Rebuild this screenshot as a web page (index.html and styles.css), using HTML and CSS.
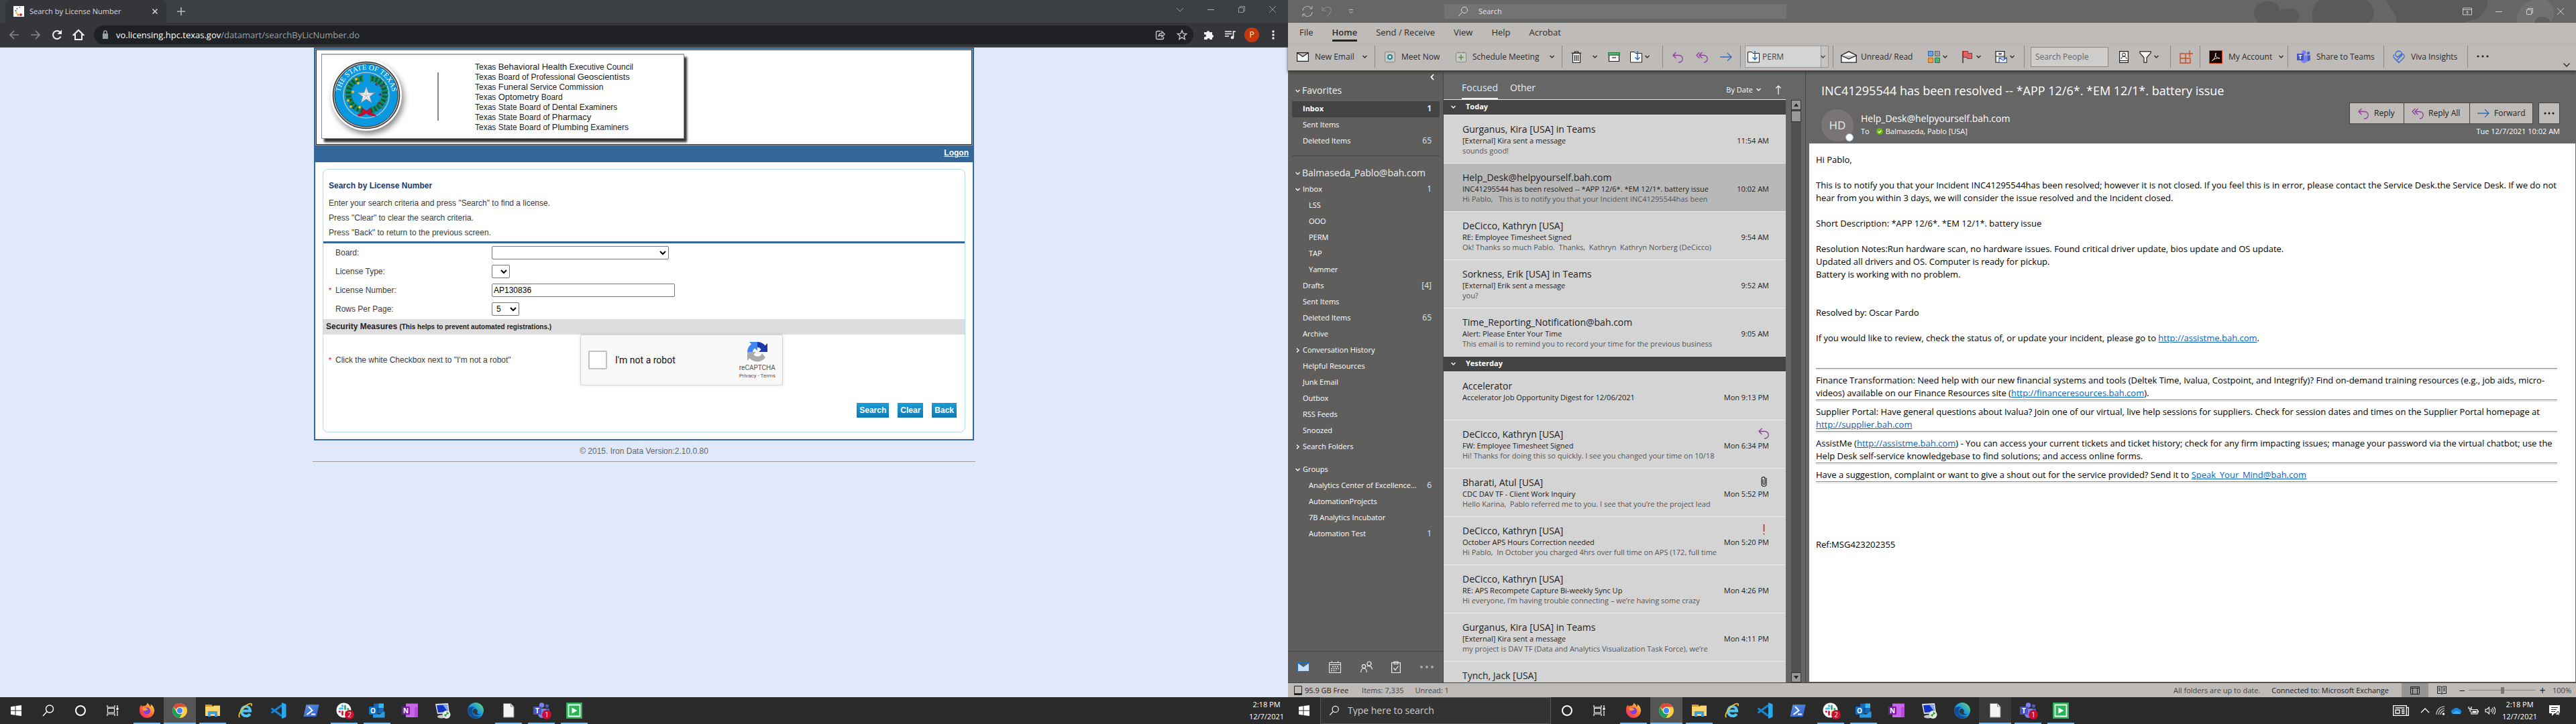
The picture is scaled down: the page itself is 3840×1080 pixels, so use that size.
FILE: index.html
```
<!DOCTYPE html>
<html lang="en">
<head>
<meta charset="utf-8">
<title>Desktop</title>
<link rel="stylesheet" href="styles.css">
</head>
<body>
<svg class="defs" aria-hidden="true">
  <defs>
    <linearGradient id="ffx" x1="0" y1="1" x2="1" y2="0"><stop offset="0" stop-color="#f0167a"/><stop offset=".5" stop-color="#ff6a2b"/><stop offset="1" stop-color="#ffe14a"/></linearGradient>
    <linearGradient id="edg" x1="0" y1="1" x2="1" y2="0"><stop offset="0" stop-color="#0c59a4"/><stop offset=".55" stop-color="#1f9de0"/><stop offset="1" stop-color="#6fe057"/></linearGradient>
    <linearGradient id="psg" x1="0" y1="0" x2="1" y2="1"><stop offset="0" stop-color="#5a8ee6"/><stop offset="1" stop-color="#2f5fc2"/></linearGradient>
  </defs>
  <symbol id="chev" viewBox="0 0 9 9"><path d="M1.5 3l3 3 3-3" fill="none" stroke="currentColor" stroke-width="1.4"/></symbol>
  <symbol id="t-start" viewBox="0 0 24 24"><path fill="#fff" d="M4 6.200l6.500-.9v6.200H4zM11.500 5.100L20 4v7.500h-8.500zM4 12.500h6.500v6.200L4 17.800zM11.500 12.500H20V20l-8.500-1.100z"/></symbol>
  <symbol id="t-search" viewBox="0 0 24 24"><g fill="none" stroke="#fff" stroke-width="1.400"><circle cx="14" cy="9.500" r="5.500"/><path d="M10 13.500L4 20"/></g></symbol>
  <symbol id="t-circle" viewBox="0 0 24 24"><circle cx="12" cy="12" r="7" fill="none" stroke="#fff" stroke-width="2"/></symbol>
  <symbol id="t-view" viewBox="0 0 24 24"><path fill="none" stroke="#fff" stroke-width="1.200" d="M4 4v3h11V4M4 20v-3h11v3M4.500 8.500h10v6.500h-10zM19 4v4M19 12v8"/><path fill="#fff" d="M17.500 8h3v3h-3z"/></symbol>
  <symbol id="t-firefox" viewBox="0 0 24 24"><path fill="url(#ffx)" d="M1 12C1 7 2 5 3.500 3.500c.2 1 .6 1.500 1.200 2C6.500 4.500 8 4.500 9 5c2-1 3-2.500 3.500-4.500C15 2 16 4 16.500 6 18 6 18 4 17.500 2.500 21 4.500 23.200 8 23 12.500 22.500 19 17.500 23 12 23S1 18 1 12z"/><circle cx="12" cy="12.500" r="5" fill="#7a3fe0"/><path fill="#ff9a2e" d="M5 9c2-2 5-2 7 .5l2 .5c-1 1.500-3 1-4 2.500-2 0-4-1-5-3.500z"/></symbol>
  <symbol id="t-chrome" viewBox="0 0 24 24"><circle cx="12" cy="12" r="11" fill="#ffcd40"/><path fill="#dc4a38" d="M2.500 6.500A11 11 0 0 1 21.500 6.500H12A5.500 5.500 0 0 0 6.800 10z"/><path fill="#1a9c5a" d="M2.500 6.500A11 11 0 0 0 11.500 23l4.300-7.600A5.500 5.500 0 0 1 7 14z"/><circle cx="12" cy="12" r="5.200" fill="#fff"/><circle cx="12" cy="12" r="4.200" fill="#4285f4"/></symbol>
  <symbol id="t-folder" viewBox="0 0 24 24"><path fill="#e09a1a" d="M1 3h9l2 2v4H1z"/><path fill="#fcd46c" d="M1 6h11l2-1.500h9V20H1z"/><path fill="#3f9fdc" d="M5 13h14v8h-4v-4H9v4H5z"/></symbol>
  <symbol id="t-ie" viewBox="0 0 24 24"><path fill="none" stroke="#4cc3f3" stroke-width="4.200" d="M5 12.500h14c0-4-3-6.500-6.500-6.500S6 9 6 13s3 7 7 7c2.500 0 4.500-1 5.500-3.200"/><path fill="none" stroke="#f6c41d" stroke-width="1.800" d="M3.500 22C0 20 5 10 12 5s11-4 8.500 0"/></symbol>
  <symbol id="t-code" viewBox="0 0 24 24"><path fill="none" stroke="#1583cf" stroke-width="3.200" d="M1.500 8.500L17 20M1.500 15.500L17 4"/><path fill="#29a9ee" d="M17 0l6.500 2.500v19L17 24z"/></symbol>
  <symbol id="t-ps" viewBox="0 0 24 24"><path fill="url(#psg)" d="M4.500 3h19.200l-4 18H.5z"/><path fill="none" stroke="#fff" stroke-width="2" d="M8 6l5.500 5.800L5.500 18M12 17.500h6"/></symbol>
  <symbol id="t-slack" viewBox="0 0 24 24"><circle cx="11.500" cy="11.500" r="11" fill="#fff"/><g stroke-width="3" stroke-linecap="round"><path stroke="#36c5f0" d="M5.500 9h4M9.500 4.500v1"/><path stroke="#2eb67d" d="M13.500 5v4.500M18 9.500h-.5"/><path stroke="#e01e5a" d="M9.500 13.500v4.500M5 13.500h.5"/><path stroke="#ecb22e" d="M14 14h4"/></g></symbol>
  <symbol id="t-outlook" viewBox="0 0 24 24"><path fill="#1769b8" d="M7 1.500h15V16H7z"/><path fill="#35b8f1" d="M14.500 1.500H22V8h-7.500z"/><path fill="#0a4f96" d="M7 8h7.500v7H7z"/><path fill="#2a9be4" d="M6 22.500V14l9 4 8.500-5v9.500z"/><path fill="#0f6fc6" d="M0 6h12v12H0z"/><text x="6" y="15.500" text-anchor="middle" class="tile">O</text></symbol>
  <symbol id="t-onenote" viewBox="0 0 24 24"><path fill="#ca64ea" d="M6 1.500h18v20.500H6z"/><path fill="#ab47cf" d="M19 7h5v5h-5zM19 12h5v10h-5z" opacity=".8"/><path fill="#7719aa" d="M0 6h12v12H0z"/><text x="6" y="15.500" text-anchor="middle" class="tile">N</text></symbol>
  <symbol id="t-rdp" viewBox="0 0 24 24"><path fill="#dfe3e8" d="M1 2l19-1 2 15-18 1z"/><path fill="#1233c4" d="M3 4l15.500-1 1.500 11-15 1z"/><path fill="#8aa7f2" d="M12 3.400l6.500-.4 1.500 11z"/><ellipse cx="10" cy="21" rx="6" ry="2.500" fill="#c5c8cc"/><circle cx="17.500" cy="18" r="6" fill="#e4e7e2"/><path fill="none" stroke="#2e9a34" stroke-width="1.500" d="M14 19l3-1-1 3M18 17l3-1M18 17l1-3"/></symbol>
  <symbol id="t-edge" viewBox="0 0 24 24"><circle cx="12" cy="12" r="12" fill="url(#edg)"/><path fill="#2b2b2b" d="M14 15.500c2-2 .5-6.500-3-6.500-2 0-4 2-3.500 5 .5 2.500 4 4.500 8 4.500 3 0 6-1.500 8-3.500l1 3-4 4c2-2 2-4 3-6-3 2-8 2-9.500-.5z" opacity=".85"/><path fill="#0f4f99" d="M.5 10C2 6.500 7 5 11 7.500 6 8 5 14 9 18.500c2 2.200 6 3 10 1.500C16 24 9 25 4.500 21 1 18 0 14 .5 10z"/></symbol>
  <symbol id="t-file" viewBox="0 0 24 24"><path fill="#f4f4f4" stroke="#8b8b8b" d="M4.500 1.500h11l4.500 4.500v16H4.500z"/><path fill="#ddd" stroke="#8b8b8b" d="M15.500 1.500V6H20z"/></symbol>
  <symbol id="t-teams" viewBox="0 0 24 24"><circle cx="12.500" cy="4" r="3.800" fill="#7b83eb"/><circle cx="20.500" cy="5" r="2.600" fill="#5059c9"/><path fill="#5059c9" d="M17 9h7v7a4 4 0 0 1-7 2z"/><path fill="#7b83eb" d="M7 9h12v8a6 6 0 0 1-12 0z"/><path fill="#4b53bc" d="M0 6h12v12H0z"/><text x="6" y="15.500" text-anchor="middle" class="tile">T</text></symbol>
  <symbol id="t-green" viewBox="0 0 24 24"><path fill="#27b556" d="M0 0h24v24H0z"/><path fill="none" stroke="#fff" stroke-width="1.800" d="M3.500 3.500h17v17h-17z"/><path fill="#fff" d="M8.500 7.500l8 4.500-8 4.500z"/></symbol>
  <symbol id="reply" viewBox="0 0 18 18"><path fill="none" stroke="#8c3d9c" stroke-width="1.300" d="M6.500 2L2 6.500 6.500 11M2 6.500h9a4.500 4.500 0 0 1 0 10.500h-1"/></symbol>
  <symbol id="replyall" viewBox="0 0 18 18"><path fill="none" stroke="#8c3d9c" stroke-width="1.300" d="M5.500 2L1 6.500 5.500 11M9.500 2L5 6.500 9.500 11M5 6.500h7a4.500 4.500 0 0 1 0 10.500"/></symbol>
  <symbol id="forward" viewBox="0 0 18 18"><path fill="none" stroke="#2e6cb8" stroke-width="1.300" d="M0 9h17M11 3l6 6-6 6"/></symbol>
  <symbol id="move" viewBox="0 0 18 18"><path fill="#f6f6f6" stroke="#222" d="M.5 1.500h6l1.500 2h9.500v13.500H.5z"/><path fill="none" stroke="#2e6cb8" stroke-width="1.500" d="M11 0v13M7.500 9.500l3.500 3.500 3.500-3.500"/></symbol>
</svg>

<main class="desk">
<section class="screen">
  <header class="tabstrip">
    <div class="tab">
      <svg width="16" height="16" viewBox="0 0 16 16"><path fill="#fff" d="M0 0h16v16H0z"/><circle cx="11" cy="13" r="2" fill="#c8232c"/><circle cx="7" cy="13" r="1.600" fill="#e4772a"/><circle cx="4.500" cy="10.500" r="1.400" fill="#efb62d"/><circle cx="3.500" cy="7" r="1.200" fill="#3c8c5a"/><circle cx="5.500" cy="4" r="1" fill="#345b9c"/><circle cx="9.500" cy="2" r="1" fill="#888"/></svg>
      <span class="tab-title">Search by License Number</span>
      <button class="bare" aria-label="Close tab"><svg width="10" height="10" viewBox="0 0 10 10"><path stroke="#d5d7da" stroke-width="1.500" d="M1.500 1.500l7 7M8.500 1.500l-7 7"/></svg></button>
    </div>
    <button class="bare newtab" aria-label="New tab"><svg width="14" height="14" viewBox="0 0 14 14"><path stroke="#b8bbbe" stroke-width="1.600" d="M7 1v12M1 7h12"/></svg></button>
    <div class="win-controls">
      <button class="bare" aria-label="Tab list"><svg width="12" height="12" viewBox="0 0 12 12"><path fill="none" stroke="#96999c" d="M1 4l5 5 5-5"/></svg></button>
      <button class="bare" aria-label="Minimize"><svg width="12" height="12" viewBox="0 0 12 12"><path stroke="#b0b3b6" d="M1 6.500h10"/></svg></button>
      <button class="bare" aria-label="Restore"><svg width="12" height="12" viewBox="0 0 12 12"><path fill="none" stroke="#96999c" d="M1.500 3.500h7v7h-7zM3.500 3.500v-2h7v7h-2"/></svg></button>
      <button class="bare" aria-label="Close"><svg width="12" height="12" viewBox="0 0 12 12"><path stroke="#96999c" d="M1 1l10 10M11 1L1 11"/></svg></button>
    </div>
  </header>
  <div class="urlbar">
    <div class="nav-buttons">
      <button class="bare" aria-label="Back"><svg width="18" height="18" viewBox="0 0 18 18"><path fill="none" stroke="#85888b" stroke-width="1.700" d="M16 9H3M9 3L3 9l6 6"/></svg></button>
      <button class="bare" aria-label="Forward"><svg width="18" height="18" viewBox="0 0 18 18"><path fill="none" stroke="#85888b" stroke-width="1.700" d="M2 9h13M9 3l6 6-6 6"/></svg></button>
      <button class="bare" aria-label="Reload"><svg width="18" height="18" viewBox="0 0 18 18"><path fill="none" stroke="#f1f3f4" stroke-width="2" d="M14.500 11.500A6 6 0 1 1 13.500 5"/><path fill="#f1f3f4" d="M9.500 8H16V1.500z"/></svg></button>
      <button class="bare" aria-label="Home"><svg width="18" height="18" viewBox="0 0 18 18"><path fill="none" stroke="#f1f3f4" stroke-width="2" d="M4 16V9H1.800L9 2l7.200 7H14v7z"/></svg></button>
    </div>
    <div class="omnibox">
      <svg width="10" height="14" viewBox="0 0 10 14"><path fill="#9aa0a6" d="M1 5h8v8H1z"/><path fill="none" stroke="#9aa0a6" stroke-width="1.500" d="M2.700 5V3.200a2.300 2.300 0 0 1 4.600 0V5"/></svg>
      <span class="url"><b>vo.licensing.hpc.texas.gov</b>/datamart/searchByLicNumber.do</span>
      <svg width="16" height="16" viewBox="0 0 16 16"><path fill="none" stroke="#c3c6c9" stroke-width="1.400" d="M8 2.500H3.500q-2 0-2 2v8q0 2 2 2h7q2 0 2-2V11M5 10c.5-3 2.500-4.500 5-4.500V3l4 4-4 4V8.500C8 8.500 6.500 9 5 10z"/></svg>
      <svg width="16" height="16" viewBox="0 0 16 16"><path fill="none" stroke="#c3c6c9" stroke-width="1.400" d="M8 1.500l1.900 4.600 4.900.3-3.800 3.200 1.200 4.900L8 11.800l-4.200 2.700L5 9.600 1.200 6.400l4.900-.3z"/></svg>
    </div>
    <div class="ext-buttons">
      <svg width="16" height="16" viewBox="0 0 16 16"><path fill="#f1f3f4" d="M1 4h4a2 2 0 1 1 4 0h4v4a2 2 0 1 1 0 4v3H9.500a2 2 0 1 0-4 0H1v-4a2 2 0 1 0 0-3.500z"/></svg>
      <svg width="16" height="16" viewBox="0 0 16 16"><path fill="none" stroke="#f1f3f4" stroke-width="1.700" d="M0 3h10M0 6.500h10M0 10h6M12.500 12V3H16"/><circle cx="11" cy="12" r="2.300" fill="#f1f3f4"/></svg>
      <span class="profile">P</span>
      <svg width="4" height="16" viewBox="0 0 4 16"><g fill="#f1f3f4"><circle cx="2" cy="3" r="1.700"/><circle cx="2" cy="8" r="1.700"/><circle cx="2" cy="13" r="1.700"/></g></svg>
    </div>
  </div>

  <div class="webpage">
    <div class="site">
      <div class="banner">
        <div class="banner-card">
          <svg class="seal" width="116" height="116" viewBox="0 0 116 116">
            <circle cx="58" cy="56" r="53" fill="#fff"/>
            <circle cx="58" cy="56" r="49.500" fill="#bbb" stroke="#333" stroke-width="1.500"/>
            <circle cx="58" cy="56" r="47" fill="#0a99e0" stroke="#333"/>
            <circle cx="58" cy="56" r="34" fill="#0a99e0" stroke="#a9c4ce" stroke-width="1.500"/>
            <path id="arc" fill="none" d="M19.500 63a39 39 0 1 1 77 0"/>
            <text class="seal-text"><textPath href="#arc" startOffset="50%" text-anchor="middle">THE STATE OF TEXAS</textPath></text>
            <g fill="none" stroke="#0d5c33" stroke-width="8" stroke-dasharray="5 1"><path d="M53 31C32 32 26 54 36 68q6 9 18 11"/><path d="M64 31c21 1 27 23 17 37q-6 9-18 11"/></g>
            <g fill="none" stroke="#1b8a47" stroke-width="11" stroke-dasharray="2 4"><path d="M53 31C32 32 26 54 36 68q6 9 18 11"/><path d="M64 31c21 1 27 23 17 37q-6 9-18 11"/></g>
            <g fill="#f0bb2e"><circle cx="43" cy="32" r="2"/><circle cx="46" cy="38" r="2"/><circle cx="38" cy="51" r="2"/><circle cx="31" cy="64" r="2"/><circle cx="35" cy="73" r="2"/><circle cx="48" cy="74" r="2"/></g>
            <g fill="#5b3a63"><circle cx="73" cy="40" r="2"/><circle cx="81" cy="42" r="2"/><circle cx="79" cy="55" r="2"/><circle cx="77" cy="68" r="2"/></g>
            <path fill="#c00f33" d="M58 79l-6-4-1 7-6 3 1 3 8-2 4-3 4 3 12 2-4-4-5-2-1-7z"/>
            <path fill="#eee" stroke="#777" stroke-width=".6" d="M58 43l3.200 9.300h9.800L63.200 58l3 9.400L58 61.700l-8.200 5.700 3-9.400-7.800-5.700h9.800z"/>
            <path stroke="#999" stroke-width=".6" d="M58 43v14M71 52.300L58 57M66 67l-8-10M50 67l8-10M45 52.300L58 57"/>
          </svg>
          <ul class="boards">
            <li>Texas <b>Behavioral Health</b> Executive Council</li>
            <li>Texas Board of Professional <b>Geoscientists</b></li>
            <li>Texas <b>Funeral</b> Service Commission</li>
            <li>Texas <b>Optometry</b> Board</li>
            <li>Texas State Board of <b>Dental</b> Examiners</li>
            <li>Texas State Board of <b>Pharmacy</b></li>
            <li>Texas State Board of <b>Plumbing</b> Examiners</li>
          </ul>
        </div>
      </div>
      <nav class="site-nav"><a href="#logon">Logon</a></nav>
      <form class="panel">
        <h1>Search by License Number</h1>
        <p>Enter your search criteria and press "Search" to find a license.</p>
        <p>Press "Clear" to clear the search criteria.</p>
        <p>Press "Back" to return to the previous screen.</p>
        <div class="rule"></div>
        <div class="fields">
          <div class="field"><span></span><label for="board">Board:</label><select id="board" class="w-board"><option></option></select></div>
          <div class="field"><span></span><label for="type">License Type:</label><select id="type" class="w-type"><option></option></select></div>
          <div class="field"><span class="req">*</span><label for="num">License Number:</label><input id="num" type="text" class="w-num" value="AP130836"></div>
          <div class="field"><span></span><label for="rows">Rows Per Page:</label><select id="rows" class="w-rows"><option>5</option></select></div>
        </div>
        <h2>Security Measures <small>(This helps to prevent automated registrations.)</small></h2>
        <div class="verify">
          <span class="req">*</span><span class="verify-text">Click the white Checkbox next to "I'm not a robot"</span>
          <div class="captcha">
            <input type="checkbox" id="robot"><label for="robot">I'm not a robot</label>
            <div class="captcha-brand">
              <svg width="32" height="32" viewBox="0 0 32 32"><path fill="#1c3aa9" d="M31 16V3l-3.500 3.500A15 15 0 0 0 16 1v8a7 7 0 0 1 5.500 3.500L18 16z"/><path fill="#4285f4" d="M16 1H4l3 3.500A15 15 0 0 0 1 16h8a7 7 0 0 1 3-5.500l4 3.500z"/><path fill="#ababab" d="M1 16v13l3.500-3.500A15 15 0 0 0 28 24l-5-6a7 7 0 0 1-12.500 1.500L14 16z"/></svg>
              <span>reCAPTCHA</span><small><a href="#privacy">Privacy</a> - <a href="#terms">Terms</a></small>
            </div>
          </div>
        </div>
        <div class="actions"><button type="button">Search</button><button type="button">Clear</button><button type="button">Back</button></div>
      </form>
    </div>
    <footer class="site-foot">© 2015. Iron Data Version:2.10.0.80</footer>
  </div>

  <footer class="taskbar">
    <button class="tk"><svg><use href="#t-start"/></svg></button><button class="tk"><svg><use href="#t-search"/></svg></button><button class="tk"><svg><use href="#t-circle"/></svg></button><button class="tk"><svg><use href="#t-view"/></svg></button>
    <div class="apps">
      <button class="tk open"><svg><use href="#t-firefox"/></svg></button><button class="tk active"><svg><use href="#t-chrome"/></svg></button><button class="tk open"><svg><use href="#t-folder"/></svg></button><button class="tk"><svg><use href="#t-ie"/></svg></button><button class="tk"><svg><use href="#t-code"/></svg></button><button class="tk"><svg><use href="#t-ps"/></svg></button><button class="tk open"><svg><use href="#t-slack"/></svg><i class="count">2</i></button><button class="tk open"><svg><use href="#t-outlook"/></svg></button><button class="tk"><svg><use href="#t-onenote"/></svg></button><button class="tk"><svg><use href="#t-rdp"/></svg></button><button class="tk"><svg><use href="#t-edge"/></svg></button><button class="tk open"><svg><use href="#t-file"/></svg></button><button class="tk open"><svg><use href="#t-teams"/></svg><i class="count">1</i></button><button class="tk open"><svg><use href="#t-green"/></svg></button>
    </div>
    <div class="clock">2:18 PM<br>12/7/2021</div>
  </footer>
</section>

<section class="screen outlook">
  <header class="ol-title">
    <div class="quick">
      <svg width="18" height="18" viewBox="0 0 18 18"><path fill="none" stroke="#b4b4b4" stroke-width="1.200" d="M2 8a7 7 0 0 1 13-3M16 1v4h-4M16 10a7 7 0 0 1-13 3M2 17v-4h4"/></svg>
      <svg width="16" height="18" viewBox="0 0 16 18"><path fill="none" stroke="#8a8a8a" stroke-width="1.200" d="M1 2v6h6M1 8c3-5 8-7 12-4 3 3 1 7-5 13"/></svg>
      <svg width="8" height="8" viewBox="0 0 8 8"><path fill="none" stroke="#c4c4c4" d="M1 1.500h6M1.500 4L4 6.500 6.500 4"/></svg>
    </div>
    <div class="ol-search"><svg width="16" height="16" viewBox="0 0 16 16"><circle cx="10" cy="6" r="4.500" fill="none" stroke="#ddd"/><path stroke="#ddd" d="M6.500 9.500L1 15"/></svg><input type="text" placeholder="Search" aria-label="Search"></div>
    <div class="art">
      <svg width="480" height="34" viewBox="0 0 480 34"><path fill="#5a5a5a" d="M0 22C0 8 10 2 20 2s18 4 18 14c12-6 30-4 30 8l-6 10H6zM88 34c-4-14 0-28 10-34h70c12 10 14 24 4 34zM196 0h152c0 12-6 22-16 28l-20 6H212c4-10-8-18-10-24 2-2-6-8-6-10z"/><path fill="#717171" d="M392 34c-2-16 8-30 24-34h20c12 8 14 20 6 34z"/><path fill="#5f5f5f" d="M418 34c2-12 22-12 24 0z"/></svg>
      <div class="ol-win">
        <svg width="14" height="12" viewBox="0 0 14 12"><path fill="none" stroke="#ccc" d="M.5 1h13v10H.5zM.5 3.500h13M7 10V5.500M5 7.500l2-2 2 2"/></svg>
        <svg width="12" height="12" viewBox="0 0 12 12"><path stroke="#ccc" d="M1 6.500h10"/></svg>
        <svg width="12" height="12" viewBox="0 0 12 12"><path fill="none" stroke="#ccc" d="M1.500 3.500h7v7h-7zM3.500 3.500v-2h7v7h-2"/></svg>
        <svg width="12" height="12" viewBox="0 0 12 12"><path stroke="#ccc" d="M1 1l10 10M11 1L1 11"/></svg>
      </div>
    </div>
  </header>
  <nav class="ribbon-tabs"><a href="#file">File</a><a href="#home" class="on">Home</a><a href="#send">Send / Receive</a><a href="#view">View</a><a href="#help">Help</a><a href="#acrobat">Acrobat</a></nav>
  <div class="ribbon">
    <div class="grp g-new"><button class="rb w-new"><svg width="18" height="14" viewBox="0 0 18 14"><path fill="#f6f6f6" stroke="#222" stroke-width="1.200" d="M.6.600h16.800v12.800H.6zM1 1l8 5.500L17 1"/></svg><span>New Email</span><svg class="cv"><use href="#chev"/></svg></button></div>
    <div class="grp g-meet"><button class="rb w-meet"><svg width="16" height="16" viewBox="0 0 16 16"><rect x=".5" y=".5" width="15" height="15" rx="1.500" fill="#c9c9c9" stroke="#8a8a8a"/><circle cx="8" cy="8" r="3" fill="#f6f6f6" stroke="#1c7f93" stroke-width="2"/></svg><span>Meet Now</span></button><button class="rb w-sched"><svg width="16" height="16" viewBox="0 0 16 16"><rect x=".5" y="1.500" width="15" height="14" rx="1.500" fill="#c9c9c9" stroke="#8a8a8a"/><path stroke="#8a8a8a" d="M4 0v3M12 0v3"/><path stroke="#4c9a3c" stroke-width="1.600" d="M8 4.500v8M4 8.500h8"/></svg><span>Schedule Meeting</span><svg class="cv"><use href="#chev"/></svg></button></div>
    <div class="grp g-del">
      <button class="rb"><svg width="16" height="18" viewBox="0 0 16 18"><path fill="#f6f6f6" stroke="#222" stroke-width="1.200" d="M2.500 3.500h11v14h-11z"/><path fill="none" stroke="#222" stroke-width="1.200" d="M.5 3h15M5.500 3V1h5v2M5.500 6v9M8 6v9M10.500 6v9"/></svg></button><svg class="cv"><use href="#chev"/></svg>
      <button class="rb"><svg width="18" height="14" viewBox="0 0 18 14"><path fill="#f6f6f6" stroke="#222" stroke-width="1.200" d="M1.500 4h15v9.500h-15z"/><path fill="#5cb078" stroke="#1f7a40" d="M.5.500h17V4H.5z"/><path stroke="#222" stroke-width="1.200" d="M6 8h6"/></svg></button>
      <button class="rb split"><svg width="18" height="18"><use href="#move"/></svg><svg class="cv"><use href="#chev"/></svg></button>
    </div>
    <div class="grp g-reply"><button class="rb"><svg width="18" height="18"><use href="#reply"/></svg></button><button class="rb"><svg width="18" height="18"><use href="#replyall"/></svg></button><button class="rb"><svg width="18" height="18"><use href="#forward"/></svg></button></div>
    <div class="grp g-perm"><button class="perm"><svg width="18" height="18"><use href="#move"/></svg><span>PERM</span><svg class="cv"><use href="#chev"/></svg></button></div>
    <div class="grp g-tags">
      <button class="rb w-unread"><svg width="24" height="18" viewBox="0 0 24 18"><path fill="#f6f6f6" stroke="#222" stroke-width="1.300" d="M.8 6.500L12 .8l11.200 5.700v10.700H.8zM1 7l11 5 11-5"/></svg><span>Unread/ Read</span></button>
      <button class="rb split"><svg width="18" height="18" viewBox="0 0 18 18"><path fill="#6ba5dc" stroke="#2d62b0" d="M.5.500h7v7h-7z"/><path fill="#a0a0a0" stroke="#666" d="M10.500.500h7v7h-7z"/><path fill="#e8a04c" stroke="#b0651a" d="M.5 10.500h7v7h-7z"/><path fill="#5cb078" stroke="#1f7a40" d="M10.500 10.500h7v7h-7z"/></svg><svg class="cv"><use href="#chev"/></svg></button>
      <button class="rb split"><svg width="18" height="18" viewBox="0 0 18 18"><path stroke="#222" stroke-width="1.300" d="M2 0v18"/><path fill="#dc6464" stroke="#b32020" d="M2.500.500h7v3h6v8h-7v-2h-6z"/></svg><svg class="cv"><use href="#chev"/></svg></button>
      <button class="rb split"><svg width="18" height="18" viewBox="0 0 18 18"><path fill="#f6f6f6" stroke="#222" stroke-width="1.200" d="M1 .6h13V17H1zM1 8h13M6 3v2h3V3"/><path fill="#f6f6f6" stroke="#2e6cb8" stroke-width="1.200" d="M6 10h11.400v7.400H6zM6 10l6 4 5.500-4"/></svg><svg class="cv"><use href="#chev"/></svg></button>
    </div>
    <div class="grp g-find"><input type="text" placeholder="Search People" aria-label="Search People"><button class="rb"><svg width="14" height="18" viewBox="0 0 14 18"><path fill="#f6f6f6" stroke="#222" stroke-width="1.200" d="M.6.600h12.800v16.800H.6zM1 14.500h12"/><circle cx="7" cy="5.500" r="2.500" fill="none" stroke="#222"/><path fill="none" stroke="#222" d="M3 12c0-5 8-5 8 0"/></svg></button><button class="rb split"><svg width="18" height="18" viewBox="0 0 18 18"><path fill="#f6f6f6" stroke="#222" stroke-width="1.200" d="M.8.800h16.400v2L11 10v7.200H7V10L.8 2.800z"/></svg><svg class="cv"><use href="#chev"/></svg></button></div>
    <div class="grp g-add"><button class="rb"><svg width="20" height="20" viewBox="0 0 20 20"><path fill="none" stroke="#d04a1c" stroke-width="1.400" d="M1 5h8v14H1zM1 12h15v7H1M16 19v-7M15 0v10M10 5h10"/></svg></button></div>
    <div class="grp g-acct"><button class="rb w-acct"><svg width="20" height="20" viewBox="0 0 20 20"><path fill="#1a0303" stroke="#e03a1c" d="M.5.500h19v19H.5z"/><path fill="none" stroke="#eee" d="M4 16c4-3 6-7 6-12-2 4 2 8 6 8-4-1-9 1-12 4z"/></svg><span>My Account</span><svg class="cv"><use href="#chev"/></svg></button></div>
    <div class="grp g-teams"><button class="rb"><svg width="20" height="20"><use href="#t-teams"/></svg><span>Share to Teams</span></button></div>
    <div class="grp g-viva"><button class="rb"><svg width="18" height="20" viewBox="0 0 18 20"><path fill="none" stroke="#3d6fcf" stroke-width="1.300" d="M2 6.500a3.300 3.300 0 0 0 0 5L9 18.500l7-7a3.500 3.500 0 0 0-5-5L7 10.500 3.500 7M4 7c-1-3 2-6 5-6s6 4 4 6L9 11M9 18l-3-3 8-8"/></svg><span>Viva Insights</span></button></div>
    <button class="rb more" aria-label="More"><svg width="18" height="4" viewBox="0 0 18 4"><g fill="#222"><circle cx="2" cy="2" r="1.600"/><circle cx="9" cy="2" r="1.600"/><circle cx="16" cy="2" r="1.600"/></g></svg></button>
    <button class="bare collapse" aria-label="Collapse ribbon"><svg width="12" height="8" viewBox="0 0 12 8"><path fill="none" stroke="#222" stroke-width="1.300" d="M1.500 1.500L6 6l4.500-4.500"/></svg></button>
  </div>

  <div class="ol-body">
    <aside class="folders">
      <button class="bare fold" aria-label="Collapse folders"><svg width="6" height="10" viewBox="0 0 6 10"><path fill="none" stroke="#fff" stroke-width="1.800" d="M5 1L1.500 5 5 9"/></svg></button>
      <h3 class="fav"><svg class="cv"><use href="#chev"/></svg>Favorites</h3>
      <ul>
        <li class="sel">Inbox<em>1</em></li><li>Sent Items</li><li>Deleted Items<em>65</em></li>
      </ul>
      <div class="sepline"></div>
      <h3><svg class="cv"><use href="#chev"/></svg>Balmaseda_Pablo@bah.com</h3>
      <ul>
        <li><svg class="cv"><use href="#chev"/></svg>Inbox<em>1</em></li>
        <li class="sub">LSS</li><li class="sub">OOO</li><li class="sub">PERM</li><li class="sub">TAP</li><li class="sub">Yammer</li>
        <li>Drafts<em>[4]</em></li><li>Sent Items</li><li>Deleted Items<em>65</em></li><li>Archive</li>
        <li><svg class="cv right"><use href="#chev"/></svg>Conversation History</li>
        <li>Helpful Resources</li><li>Junk Email</li><li>Outbox</li><li>RSS Feeds</li><li>Snoozed</li>
        <li><svg class="cv right"><use href="#chev"/></svg>Search Folders</li>
      </ul>
      <ul class="groups">
        <li><svg class="cv"><use href="#chev"/></svg>Groups</li>
        <li class="sub">Analytics Center of Excellence...<em>6</em></li><li class="sub">AutomationProjects</li><li class="sub">7B Analytics Incubator</li><li class="sub">Automation Test<em>1</em></li>
      </ul>
      <div class="modules">
        <svg width="18" height="14" viewBox="0 0 18 14"><path fill="#c3e0f7" stroke="#1a6fc0" d="M.5.500h17v13H.5zM1 1l8 5.500L17 1"/></svg>
        <svg width="18" height="18" viewBox="0 0 18 18"><path fill="none" stroke="#eee" d="M.5 2.500h17v15H.5zM.5 5.500h17M4.500 0v2M13.500 0v2"/><path stroke="#eee" stroke-width="1.700" stroke-dasharray="2 1.500" d="M5 8.500h10M3 11.500h12M3 14.500h8"/></svg>
        <svg width="18" height="18" viewBox="0 0 18 18"><g fill="none" stroke="#eee" stroke-width="1.200"><circle cx="5" cy="8" r="2.700"/><circle cx="13" cy="4" r="3"/><path d="M.7 17c0-8 8.600-8 8.600 0M10 8.500c3-2 7-1 7.500 4"/></g></svg>
        <svg width="14" height="18" viewBox="0 0 14 18"><path fill="none" stroke="#eee" stroke-width="1.200" d="M.6 2.500h12.800v15H.6zM4 4.500V1h6v3.500zM3.500 10.500l2.500 3 4.500-6"/></svg>
        <svg width="20" height="4" viewBox="0 0 20 4"><g fill="#aaa"><circle cx="2" cy="2" r="1.900"/><circle cx="10" cy="2" r="1.900"/><circle cx="18" cy="2" r="1.900"/></g></svg>
      </div>
    </aside>

    <section class="mail">
      <div class="mail-main">
      <div class="mail-head"><a href="#focused" class="on">Focused</a><a href="#other">Other</a><button class="bare by">By Date<svg class="cv"><use href="#chev"/></svg></button><svg width="10" height="14" viewBox="0 0 10 14"><path fill="none" stroke="#fff" stroke-width="1.200" d="M5 14V1M1.500 4.500L5 1l3.500 3.500"/></svg></div>
      <h4><svg class="cv"><use href="#chev"/></svg>Today</h4>
      <article><b>Gurganus, Kira [USA] in Teams</b><p class="subj">[External] Kira sent a message<time>11:54 AM</time></p><p>sounds good!</p></article>
      <article class="sel"><b>Help_Desk@helpyourself.bah.com</b><p class="subj">INC41295544 has been resolved -- *APP 12/6*. *EM 12/1*. battery issue<time>10:02 AM</time></p><p>Hi Pablo,&nbsp;&nbsp; This is to notify you that your Incident INC41295544has been</p></article>
      <article><b>DeCicco, Kathryn [USA]</b><p class="subj">RE: Employee Timesheet Signed<time>9:54 AM</time></p><p>Ok! Thanks so much Pablo.&nbsp; Thanks,&nbsp; Kathryn&nbsp; Kathryn Norberg (DeCicco)</p></article>
      <article><b>Sorkness, Erik [USA] in Teams</b><p class="subj">[External] Erik sent a message<time>9:52 AM</time></p><p>you?</p></article>
      <article><b>Time_Reporting_Notification@bah.com</b><p class="subj">Alert: Please Enter Your Time<time>9:05 AM</time></p><p>This email is to remind you to record your time for the previous business</p></article>
      <h4><svg class="cv"><use href="#chev"/></svg>Yesterday</h4>
      <article><b>Accelerator</b><p class="subj">Accelerator Job Opportunity Digest for 12/06/2021<time>Mon 9:13 PM</time></p></article>
      <article><b>DeCicco, Kathryn [USA]</b><svg class="flag" width="18" height="18"><use href="#reply"/></svg><p class="subj">FW: Employee Timesheet Signed<time>Mon 6:34 PM</time></p><p>Hi! Thanks for doing this so quickly. I see you changed your time on 10/18</p></article>
      <article><b>Bharati, Atul [USA]</b><svg class="flag" width="18" height="18" viewBox="0 0 18 18"><path fill="none" stroke="#222" stroke-width="1.200" d="M13 4v9a3.500 3.500 0 0 1-7 0V4.500a3 3 0 0 1 5-1V12a1.500 1.500 0 0 1-3 0V6"/></svg><p class="subj">CDC DAV TF - Client Work Inquiry<time>Mon 5:52 PM</time></p><p>Hello Karina,&nbsp; Pablo referred me to you. I see that you’re the project lead</p></article>
      <article><b>DeCicco, Kathryn [USA]</b><svg class="flag" width="18" height="18" viewBox="0 0 18 18"><path fill="none" stroke="#c43e2c" stroke-width="1.800" d="M9.500 1v11M9.500 14.500v2"/></svg><p class="subj">October APS Hours Correction needed<time>Mon 5:20 PM</time></p><p>Hi Pablo,&nbsp; In October you charged 4hrs over full time on APS (172, full time</p></article>
      <article><b>DeCicco, Kathryn [USA]</b><p class="subj">RE: APS Recompete Capture Bi-weekly Sync Up<time>Mon 4:26 PM</time></p><p>Hi everyone, I’m having trouble connecting – we’re having some crazy</p></article>
      <article><b>Gurganus, Kira [USA] in Teams</b><p class="subj">[External] Kira sent a message<time>Mon 4:11 PM</time></p><p>my project is DAV TF (Data and Analytics Visualization Task Force), we’re</p></article>
      <article><b>Tynch, Jack [USA]</b></article>
      </div>
      <div class="scroll">
        <span class="sb"><svg width="7" height="5" viewBox="0 0 7 5"><path fill="#222" d="M0 5l3.500-5L7 5z"/></svg></span>
        <span class="thumb"></span>
        <span class="sb down"><svg width="7" height="5" viewBox="0 0 7 5"><path fill="#222" d="M0 0l3.500 5L7 0z"/></svg></span>
      </div>
    </section>

    <section class="reader">
      <header>
        <h2>INC41295544 has been resolved -- *APP 12/6*. *EM 12/1*. battery issue</h2>
        <div class="meta">
          <div class="avatar">HD<i></i></div>
          <div class="who"><span class="from">Help_Desk@helpyourself.bah.com</span><span class="to">To <svg width="10" height="10" viewBox="0 0 10 10"><circle cx="5" cy="5" r="5" fill="#6bb700"/><path fill="none" stroke="#fff" stroke-width="1.300" d="M2.500 5l2 2 3-3.500"/></svg>Balmaseda, Pablo [USA]</span></div>
          <div class="acts">
            <div class="btns"><button class="w-r"><svg width="18" height="18"><use href="#reply"/></svg>Reply</button><button class="w-ra"><svg width="18" height="18"><use href="#replyall"/></svg>Reply All</button><button class="w-f"><svg width="18" height="18"><use href="#forward"/></svg>Forward</button><button class="w-m" aria-label="More actions"><svg width="16" height="4" viewBox="0 0 16 4"><g fill="#111"><circle cx="2" cy="2" r="1.500"/><circle cx="8" cy="2" r="1.500"/><circle cx="14" cy="2" r="1.500"/></g></svg></button></div>
            <time>Tue 12/7/2021 10:02 AM</time>
          </div>
        </div>
      </header>
      <div class="letter">
        <p>Hi Pablo,</p>
        <p>This is to notify you that your Incident INC41295544has been resolved; however it is not closed. If you feel this is in error, please contact the Service Desk.the Service Desk. If we do not<br>hear from you within 3 days, we will consider the issue resolved and the Incident closed.</p>
        <p>Short Description: *APP 12/6*. *EM 12/1*. battery issue</p>
        <p>Resolution Notes:Run hardware scan, no hardware issues. Found critical driver update, bios update and OS update.<br>Updated all drivers and OS. Computer is ready for pickup.<br>Battery is working with no problem.</p>
        <p class="gap">Resolved by: Oscar Pardo</p>
        <p>If you would like to review, check the status of, or update your incident, please go to <a href="#a">http://assistme.bah.com</a>.</p>
        <div class="notes">
          <hr>
          <p>Finance Transformation: Need help with our new financial systems and tools (Deltek Time, Ivalua, Costpoint, and Integrify)? Find on-demand training resources (e.g., job aids, micro-<br>videos) available on our Finance Resources site (<a href="#f">http://financeresources.bah.com</a>).</p>
          <hr>
          <p>Supplier Portal: Have general questions about Ivalua? Join one of our virtual, live help sessions for suppliers. Check for session dates and times on the Supplier Portal homepage at<br><a href="#s">http://supplier.bah.com</a></p>
          <hr>
          <p>AssistMe (<a href="#a">http://assistme.bah.com</a>) - You can access your current tickets and ticket history; check for any firm impacting issues; manage your password via the virtual chatbot; use the<br>Help Desk self-service knowledgebase to find solutions; and access online forms.</p>
          <hr>
          <p>Have a suggestion, complaint or want to give a shout out for the service provided? Send it to <a href="#m">Speak_Your_Mind@bah.com</a></p>
          <hr>
        </div>
        <p class="ref">Ref:MSG423202355</p>
      </div>
    </section>
  </div>

  <footer class="status">
    <svg width="12" height="14" viewBox="0 0 12 14"><path fill="none" stroke="#222" d="M.5.500h11v13H.5z"/><path fill="#222" d="M1 11h10v2.500H1z"/></svg>
    <span class="disk">95.9 GB Free</span><span class="gap-l">Items: 7,335</span><span class="gap-m">Unread: 1</span>
    <span class="push">All folders are up to date.</span><span class="gap-m dark">Connected to: Microsoft Exchange</span>
    <button class="view on" aria-label="Normal view"><svg width="14" height="12" viewBox="0 0 14 12"><path fill="none" stroke="#222" d="M.5.500h13v11H.5zM.5 2.500h13M3.500 2.500v9M10.500 2.500v9"/></svg></button>
    <button class="view" aria-label="Reading view"><svg width="14" height="13" viewBox="0 0 14 13"><path fill="none" stroke="#222" d="M7 2v11M.5 1h5L7 2l1.500-1h5v10.500h-5L7 12.500l-1.500-1h-5zM2 3.500h3M2 5.500h3M2 7.500h3M9 3.500h3M9 5.500h3M9 7.500h3"/></svg></button>
    <span class="pm">−</span><input type="range" class="zoom" aria-label="Zoom" value="50"><span class="pm">+</span><span class="pct">100%</span>
  </footer>
  <footer class="taskbar">
    <button class="tk"><svg><use href="#t-start"/></svg></button>
    <div class="tk-search"><svg width="20" height="20"><use href="#t-search"/></svg><input type="text" placeholder="Type here to search" aria-label="Type here to search"></div>
    <button class="tk"><svg><use href="#t-circle"/></svg></button><button class="tk"><svg><use href="#t-view"/></svg></button>
    <div class="apps">
      <button class="tk open"><svg><use href="#t-firefox"/></svg></button><button class="tk active"><svg><use href="#t-chrome"/></svg></button><button class="tk open"><svg><use href="#t-folder"/></svg></button><button class="tk"><svg><use href="#t-ie"/></svg></button><button class="tk"><svg><use href="#t-code"/></svg></button><button class="tk"><svg><use href="#t-ps"/></svg></button><button class="tk open"><svg><use href="#t-slack"/></svg><i class="count">2</i></button><button class="tk open"><svg><use href="#t-outlook"/></svg></button><button class="tk"><svg><use href="#t-onenote"/></svg></button><button class="tk"><svg><use href="#t-rdp"/></svg></button><button class="tk"><svg><use href="#t-edge"/></svg></button><button class="tk active dim"><svg><use href="#t-file"/></svg></button><button class="tk open"><svg><use href="#t-teams"/></svg><i class="count">1</i></button><button class="tk open"><svg><use href="#t-green"/></svg></button>
    </div>
    <div class="tray">
      <svg width="24" height="16" viewBox="0 0 24 16"><path fill="none" stroke="#fff" stroke-width="1.300" d="M.7.700h19.600v14.600H.7zM20.500 3.500h2.800v11.800H3M3.500 4h14M13 7h4.500M13 9.500h4.500M13 12h4.500M4 7h6v5H4z"/></svg>
      <svg width="14" height="8" viewBox="0 0 14 8"><path fill="none" stroke="#fff" stroke-width="1.300" d="M1 7l6-6 6 6"/></svg>
      <svg width="14" height="14" viewBox="0 0 14 14"><g fill="none" stroke="#ddd" stroke-width="1.200"><path d="M1 13C1 6 6 1 13 1M4 13c0-5 4-9 9-9M7 13c0-3 3-6 6-6"/></g><circle cx="11.500" cy="12" r="1.800" fill="#fff"/></svg>
      <svg width="16" height="12" viewBox="0 0 16 12"><path fill="#1a86d8" d="M3.500 11a3.400 3.400 0 0 1 0-7A5 5 0 0 1 12 4a3.600 3.600 0 0 1 .5 7z"/><path fill="#3cb0f2" d="M2 10l6-4 6.500 4-2 1h-9z"/></svg>
      <svg width="16" height="14" viewBox="0 0 16 14"><path fill="none" stroke="#fff" stroke-width="1.200" d="M4 5.500h10v6.500H5V9M15.500 7v3M1 1v3h4V1M3 4v4h2"/><path fill="#fff" d="M6.500 7.500h6v3h-6z"/></svg>
      <svg width="16" height="14" viewBox="0 0 16 14"><path fill="none" stroke="#fff" stroke-width="1.100" d="M1 5h2.500L6.500 2v10l-3-3H1zM9 5c1 1 1 3 0 4M11 3c2 2 2 6 0 8M13.500 1.500c3 3 3 8 0 11"/></svg>
    </div>
    <div class="clock">2:18 PM<br>12/7/2021</div>
    <button class="bare notif" aria-label="Notifications"><svg width="18" height="18" viewBox="0 0 18 18"><path fill="#fff" d="M1 1h16v12H9l-4 4v-4H1z"/><path stroke="#333" d="M4 4.500h10M4 7.500h8M4 10.500h6"/><path fill="#ddd" stroke="#333" d="M10 15l4-5q3 2 2.500 6z"/></svg></button>
  </footer>
</section>
</main>
</body>
</html>
```
FILE: styles.css
```
* { box-sizing: border-box; }
body, h1, h2, h3, h4, p, ul { margin: 0; padding: 0; }
ul { list-style: none; }
body { font: 11px/16px "Open Sans", "Noto Sans", sans-serif; overflow: hidden; }
svg { flex: none; display: block; }
button, input, select { font: inherit; margin: 0; }
.bare { background: none; border: 0; padding: 0; color: inherit; }
.defs { position: absolute; width: 0; height: 0; }
.tile { font: bold 10px "Open Sans", sans-serif; fill: #fff; }
.cv { width: 9px; height: 9px; }
.right { transform: rotate(-90deg); }

.desk { display: grid; grid-template-columns: 1fr 1fr; height: 100vh; }
.screen { display: flex; flex-direction: column; min-width: 0; min-height: 0; }

/* browser frame */
.tabstrip { display: flex; height: 34px; background: #3c4043; padding-left: 8px; align-items: stretch; }
.tab { display: flex; align-items: center; width: 240px; padding: 0 12px; gap: 8px; background: #35363a; border-radius: 8px 8px 0 0; color: #d5d7da; }
.tab-title { flex: 1; white-space: nowrap; }
.newtab { width: 44px; display: flex; align-items: center; justify-content: center; }
.win-controls { margin-left: auto; display: flex; padding-bottom: 6px; }
.win-controls button { width: 46px; display: flex; align-items: center; justify-content: center; }
.urlbar { display: flex; align-items: center; height: 37px; background: #35363a; border-bottom: 1px solid #5b5c5f; }
.nav-buttons { display: flex; gap: 14px; padding: 0 14px 0 12px; }
.omnibox { flex: 1; height: 28px; border-radius: 14px; background: #202124; display: flex; align-items: center; gap: 16px; padding: 0 9px 0 12px; }
.omnibox .url { flex: 1; font-size: 13px; color: #9aa0a6; margin-left: -5px; }
.url b { font-weight: 400; color: #fff; }
.ext-buttons { display: flex; align-items: center; gap: 13px; padding: 0 20px 0 15px; }
.ext-buttons svg:first-child { margin-right: 3px; }
.profile { width: 22px; height: 22px; border-radius: 11px; background: #c5370f; color: #fff; font-size: 12px; line-height: 22px; text-align: center; }
.ext-buttons svg:last-child { margin-left: 6px; }

/* licensing site */
.webpage { flex: 1; min-height: 0; background: #e0e8fb; font: 12px/22px "Liberation Sans", Arial, sans-serif; color: #3b3b3b; display: flex; flex-direction: column; align-items: center; }
.site { width: 984px; background: #fff; border: 2px solid #336699; border-top: 0; }
.banner { border: 2px solid #333; border-top-color: #444; outline: 1px solid #999; outline-offset: -1px; margin-top: 2px; height: 144px; padding: 5px 7px; box-shadow: 0 -2px 0 #336699; }
.banner-card { position: relative; display: flex; align-items: center; width: 541px; height: 127px; background: #fff; border: 1px solid #8a8a8a; border-top: 2px solid #aaa; box-shadow: 4px 5px 3px #333; }
.seal { margin: 0 48px 0 8px; filter: drop-shadow(3px 5px 4px #0007); }
.seal-text { font: 11px "Liberation Serif", serif; fill: #fff; }
.boards { border-left: 2px solid #888; height: 72px; padding-left: 54px; color: #222; display: flex; flex-direction: column; justify-content: center; white-space: nowrap; }
.boards b { font-weight: 400; font-size: 13px; }
.boards li { height: 15px; flex: none; line-height: 15px; }
.site-nav { height: 25px; background: #336699; text-align: right; padding-right: 6px; line-height: 23px; }
.site-nav a { color: #fff; font-weight: bold; }
.panel { margin: 10px 11px; border: 1px solid #b5dcea; border-radius: 8px; }
.panel h1 { font-size: 12px; line-height: 24px; color: #193a6b; padding: 12px 8px 3px; }
.panel p { padding-left: 8px; }
.rule { height: 3px; background: #336699; margin-top: 2px; }
.fields { padding-bottom: 1px; }
.field { display: flex; align-items: center; height: 28px; padding-left: 8px; }
.field > span, .verify > .req { width: 10px; }
.field label { width: 233px; }
.req { color: #c22; font-size: 11px; }
.field select, .field input { height: 20px; font-size: 12px; background: #fff; color: #000; border: 1px solid #767676; border-radius: 2px; padding: 0 2px; }
.w-board { width: 264px; } .w-type { width: 27px; } .w-num { width: 273px; } .w-rows { width: 41px; }
.panel h2 { background: #ddd; color: #222; font-size: 12px; line-height: 23px; padding-left: 4px; }
.panel h2 small { font-size: 10px; }
.verify { display: flex; align-items: center; padding-left: 8px; height: 76px; }
.verify-text { width: 365px; }
.captcha { width: 302px; height: 76px; background: #f9f9f9; border: 1px solid #d3d3d3; border-radius: 3px; box-shadow: 0 0 4px 1px #0001; display: flex; align-items: center; padding: 0 10px 0 11px; font-family: Roboto, sans-serif; font-size: 14px; color: #111; }
.captcha input { appearance: none; width: 28px; height: 28px; border: 2px solid #c1c1c1; border-radius: 2px; background: #fff; margin-right: 12px; }
.captcha label { flex: 1; }
.captcha-brand { display: flex; flex-direction: column; align-items: center; font-size: 10px; line-height: 14px; color: #555; }
.captcha-brand span { line-height: 15px; }
.captcha-brand small { font-size: 8px; line-height: 10px; }
.captcha-brand a { color: inherit; text-decoration: none; }
.actions { display: flex; justify-content: flex-end; gap: 13px; padding: 26px 12px 21px; }
.actions button { background: linear-gradient(#1c9cd8, #0d7ab2); border: 0; color: #fff; font-weight: bold; height: 22px; padding: 0 4px; }
.site-foot { width: 988px; border-bottom: 1px solid #999; text-align: center; color: #666; height: 32px; line-height: 33px; }

/* taskbar */
.taskbar { display: flex; height: 40px; flex: none; background: #2a2a2a; color: #fff; }
.tk { width: 48px; height: 40px; border: 0; padding: 0; background: none; display: flex; align-items: center; justify-content: center; position: relative; }
.tk svg { width: 24px; height: 24px; }
.apps { display: flex; gap: 1px; margin-left: 3px; }
.open { background: linear-gradient(#76b9ed, #76b9ed) center bottom / 40px 2px no-repeat; }
.active { background: linear-gradient(#76b9ed, #76b9ed) center bottom / 48px 2px no-repeat #555; }
.dim { background-color: #3a3a3a; }
.count { position: absolute; right: 9px; top: 19px; width: 14px; height: 14px; border-radius: 7px; background: #c8102e; color: #fff; font: 10px/14px "Open Sans", sans-serif; text-align: center; }
.clock { margin-left: auto; width: 64px; text-align: center; line-height: 18px; padding-top: 2px; }
.tk-search { width: 344px; display: flex; align-items: center; gap: 10px; padding-left: 10px; background: #333; border: 1px solid #5a5a5a; }
.tk-search input { background: none; border: 0; padding: 0; width: 220px; font-size: 14px; }
.tk-search input::placeholder { color: #ccc; }
.tray { margin-left: auto; display: flex; align-items: center; gap: 9px; }
.tray svg:first-child { margin-right: 8px; }
.tray + .clock { margin-left: 4px; }
.notif { margin: 0 23px 0 11px; }

/* mail window */
.outlook { background: #666; color: #fff; }
.ol-title { display: flex; height: 34px; flex: none; align-items: center; }
.quick { width: 233px; display: flex; align-items: center; gap: 12px; padding-left: 20px; }
.quick svg:last-child { margin-left: 12px; }
.ol-search { width: 510px; height: 22px; background: #737373; display: flex; align-items: center; gap: 15px; padding-left: 20px; }
.ol-search input { background: none; border: 0; padding: 0; }
.ol-search input::placeholder { color: #e6e6e6; }
.art { margin-left: auto; position: relative; }
.ol-win { position: absolute; inset: 0; display: flex; align-items: center; justify-content: flex-end; gap: 34px; padding-right: 17px; }
.ribbon-tabs { height: 32px; flex: none; background: #bfbbb8; display: flex; gap: 28px; padding: 3px 0 0 17px; }
.ribbon-tabs a { color: #2b2b2b; text-decoration: none; font-size: 13px; line-height: 22px; height: 25px; }
.ribbon-tabs .on { font-weight: 600; border-bottom: 3px solid #222; }
.ribbon { height: 39px; flex: none; background: #bfbbb8; display: flex; color: #2b2b2b; font-size: 12px; box-shadow: 0 3px 4px #3a3a3a; position: relative; padding-bottom: 4px; }
.grp { display: flex; align-items: center; border-right: 1px solid #8a8886; height: 33px; margin-top: 2px; white-space: nowrap; }
.rb { background: none; border: 0; padding: 0; color: inherit; display: flex; align-items: center; gap: 9px; text-align: left; }
.rb span { flex: 1; }
.split { gap: 3px; }
.g-new { width: 130px; padding-left: 13px; } .w-new { width: 106px; }
.g-meet { width: 279px; padding-left: 14px; } .w-meet { width: 106px; } .w-sched { width: 148px; }
.g-del { width: 150px; padding-left: 13px; gap: 15px; }
.g-reply { width: 116px; padding-left: 13px; gap: 18px; }
.g-perm { width: 138px; padding-left: 6px; }
.perm { width: 125px; height: 33px; display: flex; align-items: center; gap: 4px; padding: 0 3px; background: linear-gradient(90deg, #d4d4d4 112px, #999 112px, #999 113px, #c6c3c0 113px); border: 1px solid #999; color: #444; text-align: left; }
.perm span { flex: 1; }
.g-tags { width: 285px; padding-left: 11px; gap: 20px; } .w-unread { width: 110px; gap: 6px; }
.g-find { width: 218px; padding-left: 9px; gap: 16px; }
.g-find input { width: 116px; height: 30px; background: #cfcdcb; border: 1px solid #8a8886; padding: 0 6px; }
.g-find input::placeholder { color: #666; }
.g-add { width: 44px; padding-left: 13px; }
.g-acct { width: 131px; padding-left: 13px; } .w-acct { width: 108px; }
.g-teams { width: 143px; padding-left: 13px; }
.g-viva { width: 125px; padding-left: 13px; }
.more { padding-left: 13px; }
.collapse { margin: 0 8px 0 auto; align-self: flex-end; }

.ol-body { flex: 1; min-height: 0; display: flex; }
.folders { width: 232px; flex: none; background: #605e5c; border-right: 1px solid #444; display: flex; flex-direction: column; }
.fold { align-self: flex-end; margin: 5px 13px 0 0; height: 10px; }
.folders h3 { font-size: 14px; font-weight: 400; display: flex; align-items: center; gap: 2px; padding-left: 10px; color: #eee; margin-top: 2px; height: 26px; }
.folders .fav { margin-bottom: 3px; }
.folders ul { padding: 0 5px 0 6px; }
.folders li { height: 24px; padding: 0 0 2px 16px; display: flex; align-items: center; white-space: nowrap; }
.folders li .cv { margin: 0 3px 0 -12px; }
.folders .sub { padding-left: 25px; }
.folders em { font-style: normal; margin-left: auto; padding-right: 12px; font-size: 12px; color: #dbeaf8; }
.folders .sel { background: #444; font-weight: bold; }
.sepline { height: 1px; background: #444; margin: 9px 5px 10px 6px; }
.folders .groups { margin-top: 10px; }
.modules { margin-top: auto; height: 47px; flex: none; border-top: 1px solid #444; display: flex; align-items: center; justify-content: space-between; padding: 0 14px; }

.mail { flex: none; display: flex; width: 540px; border-right: 1px solid #444; }
.mail-main { width: 510px; overflow: hidden; color: #222; }
.mail-head { height: 44px; border-bottom: 1px solid #eee; display: flex; align-items: center; padding: 14px 6px 0 27px; color: #fff; font-size: 13px; }
.mail-head a { color: #eee; text-decoration: none; font-size: 14px; height: 29px; line-height: 24px; margin-right: 18px; }
.mail-head .on { color: #dbeaf8; border-bottom: 2px solid #eee; }
.by { margin-left: auto; margin-right: 20px; display: flex; align-items: center; gap: 4px; font-size: 11px; }
.mail h4 { height: 23px; background: #444; color: #fff; border-bottom: 1px solid #e8e8e8; display: flex; align-items: center; gap: 14px; padding: 0 0 2px 10px; font-size: 11px; }
.mail article { height: 72px; background: #d4d4d4; border-bottom: 1px solid #ececec; padding: 11px 25px 0 28px; position: relative; white-space: nowrap; }
.mail article.sel { background: #b8b8b8; }
.mail article b { display: block; font-weight: 400; font-size: 14px; line-height: 19px; }
.mail article p { line-height: 14px; color: #555; white-space: nowrap; }
.mail article .subj { color: #222; line-height: 16px; display: flex; justify-content: space-between; }
.flag { position: absolute; right: 24px; top: 10px; }
.scroll { width: 15px; margin-left: 8px; margin-top: 44px; background: #505050; display: flex; flex-direction: column; }
.sb { height: 15px; background: #999; border: 1px solid #333; display: flex; align-items: center; justify-content: center; }
.thumb { height: 17px; background: #999; border: 1px solid #333; margin-top: 1px; }
.down { margin-top: auto; }

.reader { flex: 1; min-width: 0; display: flex; flex-direction: column; padding: 0 1px 1px 5px; }
.reader header { height: 109px; flex: none; padding: 19px 23px 0 18px; }
.reader h2 { font-weight: 400; font-size: 18px; line-height: 22px; }
.meta { display: flex; gap: 11px; margin-top: 7px; }
.avatar { position: relative; width: 48px; height: 48px; border-radius: 24px; background: #7a7574; color: #e8e8e8; font-size: 17px; line-height: 48px; text-align: center; margin-top: 10px; }
.avatar i { position: absolute; right: 0; bottom: 0; width: 12px; height: 12px; border-radius: 6px; background: #fff; border: 1px solid #9cb8c8; }
.who { flex: 1; display: flex; flex-direction: column; padding-top: 13px; }
.from { font-size: 14px; line-height: 22px; }
.to { display: flex; align-items: center; gap: 4px; }
.to svg { margin-left: 6px; }
.acts { display: flex; flex-direction: column; align-items: flex-end; gap: 3px; }
.btns { display: flex; }
.btns button { height: 32px; background: #bfbbb8; border: 1px solid #444; margin-right: -1px; display: flex; align-items: center; gap: 7px; padding: 0 11px; color: #222; font-size: 12px; }
.w-r { width: 82px; } .w-ra { width: 99px; } .w-f { width: 95px; }
.btns .w-m { width: 32px; margin: 0 0 0 9px; padding: 0 7px; }
.letter { flex: 1; background: #fff; color: #000; padding: 15px 27px 0 10px; font-size: 13px; line-height: 19px; white-space: nowrap; }
.letter p { margin-bottom: 19px; }
.letter .gap { margin-top: 38px; }
.letter a { color: #0563c1; }
.notes { margin-top: 35px; }
.notes p { margin: 0; }
.notes hr { height: 3px; border: 0; border-top: 1px solid #888; border-bottom: 1px solid #ddd; margin: 0 0 6px; }
.letter .ref { margin-top: 82px; }

.status { display: flex; height: 22px; flex: none; align-items: center; background: #bfbbb8; border-top: 1px solid #444; color: #444; padding: 0 7px 0 9px; white-space: nowrap; }
.disk { margin-left: 4px; color: #222; }
.gap-l { margin-left: 20px; } .gap-m { margin-left: 17px; } .dark { color: #222; }
.push { margin-left: auto; }
.view { width: 40px; height: 21px; border: 0; padding: 0; background: none; display: flex; align-items: center; justify-content: center; }
.view.on { background: #979593; margin-left: 19px; }
.pm { font-size: 16px; width: 20px; text-align: center; color: #222; }
.zoom { appearance: none; width: 100px; height: 10px; background: linear-gradient(#888, #888) center / 100% 1px no-repeat; }
.zoom::-webkit-slider-thumb { appearance: none; width: 5px; height: 10px; background: #777; }
.pct { margin-left: 5px; }
```
